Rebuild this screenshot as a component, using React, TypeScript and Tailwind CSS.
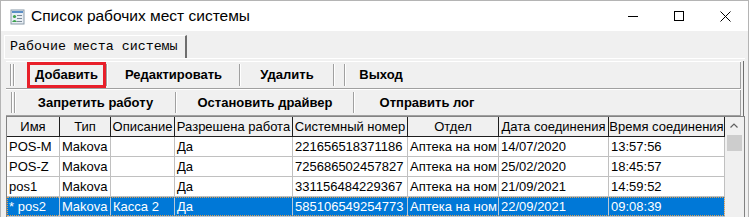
import React from "react";

const cols = [
  { title: "Имя", w: "w-[53px]" },
  { title: "Тип", w: "w-[51px]" },
  { title: "Описание", w: "w-[64px]" },
  { title: "Разрешена работа", w: "w-[118px]" },
  { title: "Системный номер", w: "w-[115px]" },
  { title: "Отдел", w: "w-[91px]" },
  { title: "Дата соединения", w: "w-[110px]" },
  { title: "Время соединения", w: "w-[116px]" },
];

const rows = [
  ["POS-M", "Makova", "", "Да", "221656518371186", "Аптека на ном", "14/07/2020", "13:57:56"],
  ["POS-Z", "Makova", "", "Да", "725686502457827", "Аптека на ном", "25/02/2020", "18:45:57"],
  ["pos1", "Makova", "", "Да", "331156484229367", "Аптека на ном", "21/09/2021", "14:59:52"],
  ["* pos2", "Makova", "Касса 2", "Да", "585106549254773", "Аптека на ном", "22/09/2021", "09:08:39"],
  ["", "", "", "", "", "", "", ""],
];

function Grip() {
  return (
    <div className="flex h-full items-center gap-[1px] py-[2px]">
      <div className="h-full w-[2px] border-l border-r border-l-[#a0a0a0] border-r-white" />
      <div className="h-full w-[2px] border-l border-r border-l-[#a0a0a0] border-r-white" />
    </div>
  );
}

function Sep() {
  return <div className="my-[2px] w-[2px] self-stretch border-l border-r border-l-[#a0a0a0] border-r-white" />;
}

function ToolButton({ label, w, boxed }: { label: string; w: string; boxed?: boolean }) {
  return (
    <div
      className={`flex h-full items-center justify-center font-bold text-[13px] text-black ${w} ${
        boxed ? "border-[3px] border-[#e8202a]" : ""
      }`}
    >
      {label}
    </div>
  );
}

function AppIcon() {
  return (
    <svg width="16" height="16" viewBox="0 0 16 16">
      <rect x="1" y="1" width="13" height="14" fill="#e8eef4" stroke="#8a9aa8" />
      <rect x="2" y="2" width="11" height="2" fill="#5b8fc7" />
      <rect x="7" y="6" width="5" height="1" fill="#7a8a98" />
      <rect x="7" y="9" width="5" height="1" fill="#7a8a98" />
      <rect x="7" y="12" width="5" height="1" fill="#7a8a98" />
      <circle cx="4.5" cy="7.5" r="1.6" fill="#3aa04a" />
      <path d="M2 13 Q4.5 9 7 13 Z" fill="#3aa04a" />
    </svg>
  );
}

export default function App() {
  return (
    <div
      className="relative h-[217px] w-[749px] overflow-hidden border-x border-t border-[#b4b4b4] bg-[#f0f0f0] text-black"
      style={{ fontFamily: '"Liberation Sans", Arial, sans-serif' }}
    >
      {/* title bar */}
      <div className="flex h-[30px] items-center bg-white">
        <div className="ml-[9px] mt-[1px]">
          <AppIcon />
        </div>
        <div className="ml-[5px] text-[15.5px] leading-none">Список рабочих мест системы</div>
        <div className="ml-auto flex h-full items-center">
          <div className="flex h-full w-[46px] items-center justify-center">
            <svg width="10" height="10" viewBox="0 0 10 10">
              <line x1="0" y1="5.5" x2="10" y2="5.5" stroke="#000" strokeWidth="1" />
            </svg>
          </div>
          <div className="flex h-full w-[46px] items-center justify-center">
            <svg width="10" height="10" viewBox="0 0 10 10">
              <rect x="0.5" y="0.5" width="9" height="9" fill="none" stroke="#000" strokeWidth="1" />
            </svg>
          </div>
          <div className="flex h-full w-[46px] items-center justify-center">
            <svg width="11" height="11" viewBox="0 0 11 11">
              <path d="M0.5 0.5 L10.5 10.5 M10.5 0.5 L0.5 10.5" stroke="#000" strokeWidth="1" />
            </svg>
          </div>
        </div>
      </div>

      {/* tab */}
      <div className="pl-[3px] pt-[2px]">
        <div
          className="inline-flex h-[23px] items-center border-l border-t border-white border-r-2 border-r-[#6e6e6e] pl-[5px] pr-[7px] text-[13.3px]"
          style={{ fontFamily: '"Liberation Mono", "Courier New", monospace' }}
        >
          Рабочие места системы
        </div>
      </div>

      {/* tab page */}
      <div className="ml-[3px] mr-[3px] border-t border-white pl-[2px] pr-[1px] pt-[2px]">
        <div className="border-r border-[#6e6e6e] pr-[2px]">
          <div className="flex h-[28px] items-stretch border-b border-t border-b-[#a0a0a0] border-t-white pl-[4px]">
            <Grip />
            <div className="w-[12px]" />
            <ToolButton label="Добавить" w="w-[79px]" boxed />
            <Sep />
            <ToolButton label="Редактировать" w="w-[131px]" />
            <Sep />
            <ToolButton label="Удалить" w="w-[92px]" />
            <Sep />
            <div className="w-[9px]" />
            <Sep />
            <ToolButton label="Выход" w="w-[70px]" />
            <div className="flex-1 border-r border-[#a0a0a0]" />
          </div>
          <div className="flex h-[27px] items-stretch border-b border-t border-b-[#a0a0a0] border-t-white pl-[5px]">
            <Grip />
            <ToolButton label="Запретить работу" w="w-[159px]" />
            <Sep />
            <ToolButton label="Остановить драйвер" w="w-[176px]" />
            <Sep />
            <ToolButton label="Отправить лог" w="w-[144px]" />
            <div className="flex-1 border-r border-[#a0a0a0]" />
          </div>
        </div>
      </div>

      {/* grid */}
      <div className="ml-[5px] mr-[3px] flex border border-[#828282] bg-white text-[13px]">
        <div className="flex flex-col">
          <div className="flex h-[20px] bg-[#f0f0f0]">
            {cols.map((c) => (
              <div
                key={c.title}
                className={`${c.w} flex items-center justify-center overflow-hidden whitespace-nowrap border-b border-r border-[#1e1e1e]`}
              >
                {c.title}
              </div>
            ))}
          </div>
          {rows.map((r, i) => {
            const sel = i === 3;
            return (
              <div
                key={i}
                className={`relative flex h-[20px] ${sel ? "bg-[#0078d7] text-white" : "bg-white"}`}
              >
                {r.map((v, j) => (
                  <div
                    key={j}
                    className={`${cols[j].w} flex items-center overflow-hidden whitespace-nowrap border-b border-r pl-[2px] ${
                      sel ? "border-[#b8c8d8]" : "border-[#c0c0c0]"
                    }`}
                  >
                    {v}
                  </div>
                ))}
                {sel && (
                  <div className="pointer-events-none absolute inset-x-0 top-0 h-[19px] border border-dotted border-[#e0a050]" />
                )}
              </div>
            );
          })}
        </div>
        {/* scrollbar */}
        <div className="flex w-[18px] flex-col items-center bg-[#f0f0f0]">
          <div className="flex h-[18px] w-full items-center justify-center">
            <svg width="8" height="5" viewBox="0 0 8 5">
              <path d="M0.5 4.5 L4 1 L7.5 4.5" fill="none" stroke="#606060" strokeWidth="1.2" />
            </svg>
          </div>
          <div className="h-[16px] w-[15px] bg-[#cdcdcd]" />
        </div>
        <div className="flex-1 bg-[#f0f0f0]" />
      </div>
    </div>
  );
}
